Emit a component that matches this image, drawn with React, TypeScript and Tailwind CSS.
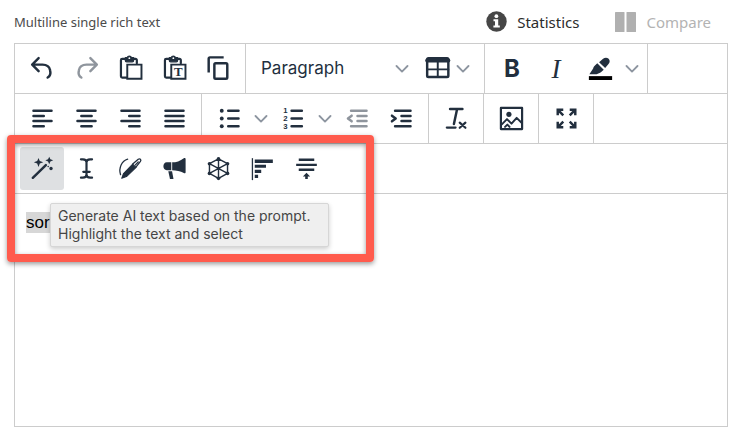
import React from 'react';
import { clsx } from 'clsx';

function Icon({ children }: { children: React.ReactNode }) {
  return (
    <svg
      width="31"
      height="31"
      viewBox="0 0 24 24"
      fill="none"
      stroke="currentColor"
      strokeWidth="1.9"
      strokeLinecap="round"
      strokeLinejoin="round"
      aria-hidden="true"
      className="shrink-0"
    >
      {children}
    </svg>
  );
}

function Chevron() {
  return (
    <svg width="14" height="8" viewBox="0 0 14 8" fill="none" stroke="#8d95a0" strokeWidth="1.8" strokeLinecap="round" strokeLinejoin="round" aria-hidden="true">
      <path d="M1.5 1 7 6.6 12.5 1" />
    </svg>
  );
}

type ToolButtonProps = {
  label: string;
  active?: boolean;
  disabled?: boolean;
  children: React.ReactNode;
};

function ToolButton({ label, active, disabled, children }: ToolButtonProps) {
  return (
    <button
      type="button"
      aria-label={label}
      disabled={disabled}
      className={clsx(
        'flex h-[43px] w-11 shrink-0 items-center justify-center rounded-[3px]',
        active && 'bg-[#dee0e2]',
        disabled ? 'text-[#8f959d]' : 'text-[#222f3e]'
      )}
    >
      {children}
    </button>
  );
}

function MenuArrow({ label }: { label: string }) {
  return (
    <button type="button" aria-label={label} className="flex h-[43px] w-5 shrink-0 items-center justify-center">
      <Chevron />
    </button>
  );
}

function Group({ children }: { children: React.ReactNode }) {
  return <div className="flex items-center border-r border-[#cccccc] px-[5px]">{children}</div>;
}

function Row({ children }: { children: React.ReactNode }) {
  return <div className="flex h-[50px] border-b border-[#cccccc]">{children}</div>;
}

const Clipboard = () => (
  <>
    <path d="M7.5 4.6H5.6a1 1 0 0 0-1 1V18a1 1 0 0 0 1 1H9M14.8 4.6h1.1a1 1 0 0 1 1 1V8" strokeWidth="1.7" />
    <path d="M8 3.6h1.4a1.8 1.8 0 0 1 3.4 0h1.6v2.2a1 1 0 0 1-1 1H9a1 1 0 0 1-1-1z" fill="currentColor" strokeWidth="1" />
    <circle cx="11.1" cy="4" r=".7" fill="#fff" stroke="none" />
    <path d="M9.5 9h11v11h-11z" strokeWidth="1.5" strokeLinejoin="miter" />
  </>
);

export default function App() {
  return (
    <main className="bg-white pr-[22px] pl-3.5 [font-family:Inter,Roboto,sans-serif]">
      <header className="flex h-[43px] items-center justify-between">
        <label id="editor-label" className="font-['Noto_Sans',sans-serif] text-[13px] leading-5 text-[#4b4b4b]">
          Multiline single rich text
        </label>
        <div className="flex items-center gap-9 pr-[17px] font-['Noto_Sans',sans-serif] text-[15px] leading-6">
          <button type="button" className="flex items-center gap-2.5 text-[#2c2c2c]">
            <svg width="21" height="21" viewBox="0 0 21 21" aria-hidden="true">
              <circle cx="10.5" cy="10.5" r="10.2" fill="#464646" />
              <circle cx="10.4" cy="5.2" r="1.9" fill="#fff" />
              <path d="M7.5 8.3h4.7v6.2h1.6v2H7.4v-2H9v-4.2H7.5z" fill="#fff" />
            </svg>
            Statistics
          </button>
          <button type="button" disabled className="flex items-center gap-2.5 text-[#b3b3b3]">
            <svg width="21" height="20" viewBox="0 0 21 20" fill="#b0b0b0" aria-hidden="true">
              <rect width="9.5" height="20" rx=".6" />
              <rect x="11.5" width="9.5" height="20" rx=".6" />
            </svg>
            Compare
          </button>
        </div>
      </header>

      <section className="relative border border-[#cccccc]">
        <div role="toolbar" aria-label="Formatting">
          <Row>
            <Group>
              <ToolButton label="Undo">
                <Icon><path d="M9 4 4 9l5 5M4.4 9H12c3.4 0 5.4 1.7 5.9 4.3.5 2.3-.3 4.8-1.9 5.7" /></Icon>
              </ToolButton>
              <ToolButton label="Redo" disabled>
                <Icon><path d="m15 4 5 5-5 5M19.6 9H12c-3.4 0-5.4 1.7-5.9 4.3-.5 2.3.3 4.8 1.9 5.7" /></Icon>
              </ToolButton>
              <ToolButton label="Paste">
                <Icon><Clipboard /></Icon>
              </ToolButton>
              <ToolButton label="Paste as text">
                <Icon>
                  <Clipboard />
                  <text x="15" y="18" textAnchor="middle" fontSize="10" fontWeight="700" fill="currentColor" stroke="none" className="font-['Liberation_Serif',serif]">T</text>
                </Icon>
              </ToolButton>
              <ToolButton label="Copy">
                <Icon>
                  <rect x="8.8" y="8" width="10" height="12" rx="1" />
                  <path d="M4.4 15V4.4a1 1 0 0 1 1-1H16" strokeLinecap="butt" />
                </Icon>
              </ToolButton>
            </Group>
            <Group>
              <div className="relative flex h-[43px] w-[168px] items-center">
                <select aria-label="Block format" className="h-full w-full appearance-none bg-transparent pl-2.5 text-[17px] text-[#222f3e]">
                  <option>Paragraph</option>
                </select>
                <span className="pointer-events-none absolute right-2.5">
                  <Chevron />
                </span>
              </div>
              <button type="button" aria-label="Table" className="flex h-[43px] w-[60px] items-center gap-[3px] pl-[3px] text-[#222f3e]">
                <Icon>
                  <rect x="4" y="4" width="16.4" height="14.6" rx="1" />
                  <path d="M4 5.8h16.4" strokeWidth="3" />
                  <path d="M12.2 7v11.6M4 12.700h16.400" strokeWidth="1.5" />
                </Icon>
                <Chevron />
              </button>
            </Group>
            <Group>
              <ToolButton label="Bold"><b className="text-[24px] leading-8">B</b></ToolButton>
              <ToolButton label="Italic"><i className="font-['Liberation_Serif',serif] text-[27px] leading-8">I</i></ToolButton>
              <ToolButton label="Highlight color">
                <Icon>
                  <path d="M3 19.4h18" stroke="#000" strokeWidth="3" strokeLinecap="butt" />
                  <g fill="currentColor" stroke="none">
                    <path d="M3.400 16.400 6.300 12c.2-.9.5-1.500 1-2l2.200-2 5 4.900-2.200 2c-.7.6-1.300.8-2 .9l-1.300.6z" />
                    <path d="m10.900 7.200 3.100-2.700c1.300-1.100 3.200-1.100 4.300 0s1.100 2.900-.1 4.100l-2.600 3z" />
                  </g>
                </Icon>
              </ToolButton>
              <MenuArrow label="Highlight color menu" />
            </Group>
          </Row>

          <Row>
            <Group>
              <ToolButton label="Align left">
                <Icon><path d="M5 6h14M5 10h8M5 14h14M5 18h8" /></Icon>
              </ToolButton>
              <ToolButton label="Align center">
                <Icon><path d="M5 6h14M8 10h8M5 14h14M8 18h8" /></Icon>
              </ToolButton>
              <ToolButton label="Align right">
                <Icon><path d="M5 6h14M11 10h8M5 14h14M11 18h8" /></Icon>
              </ToolButton>
              <ToolButton label="Justify">
                <Icon><path d="M5 6h14M5 10h14M5 14h14M5 18h14" /></Icon>
              </ToolButton>
            </Group>
            <Group>
              <ToolButton label="Bullet list">
                <Icon>
                  <path d="M11 6h8M11 12h8M11 18h8" />
                  <g fill="currentColor" stroke="none">
                    <circle cx="6" cy="6" r="1.5" />
                    <circle cx="6" cy="12" r="1.5" />
                    <circle cx="6" cy="18" r="1.5" />
                  </g>
                </Icon>
              </ToolButton>
              <MenuArrow label="Bullet list menu" />
              <ToolButton label="Numbered list">
                <Icon>
                  <path d="M10.5 6H18.500M10.500 12H18.500M10.500 18H18.500" />
                  <g fill="currentColor" stroke="none" fontSize="6" fontWeight="700" className="font-['Liberation_Sans',sans-serif]">
                    <text x="4" y="8">1</text>
                    <text x="4" y="14">2</text>
                    <text x="4" y="20">3</text>
                  </g>
                </Icon>
              </ToolButton>
              <MenuArrow label="Numbered list menu" />
              <ToolButton label="Decrease indent" disabled>
                <Icon>
                  <path d="M7 6h12M12 10h7M12 14h7M7 18h12" />
                  <path d="M7.5 9.8 4.6 12l2.900 2.200" />
                </Icon>
              </ToolButton>
              <ToolButton label="Increase indent">
                <Icon>
                  <path d="M7 6h12M12 10h7M12 14h7M7 18h12" />
                  <path d="M4.6 9.8 7.5 12l-2.900 2.200" />
                </Icon>
              </ToolButton>
            </Group>
            <Group>
              <ToolButton label="Clear formatting">
                <Icon>
                  <path d="M7 4.600h9.600M12.400 5 10 16.300" />
                  <path d="M4.500 19h6.800M14.500 15.200l4.400 4M18.900 15.200l-4.400 4" strokeWidth="1.7" />
                </Icon>
              </ToolButton>
            </Group>
            <Group>
              <ToolButton label="Insert image">
                <Icon>
                  <rect x="3.8" y="3.8" width="16.4" height="16.4" strokeWidth="1.7" />
                  <path d="m4.500 16.500 4-4 3.500 3.500 4-4.500 4 4M7 18.500l1.800-1.800 1.700 1.800" strokeWidth="1.5" />
                  <circle cx="10" cy="8.8" r="2" fill="currentColor" stroke="none" />
                </Icon>
              </ToolButton>
            </Group>
            <Group>
              <ToolButton label="Fullscreen">
                <Icon>
                  <path
                    d="M5.2 9.500V5.200h4.300M5.700 5.700l3.800 3.800M14.500 5.200h4.300v4.300M18.300 5.700l-3.800 3.800M5.200 14.500v4.300h4.300M5.700 18.300l3.800-3.800M14.500 18.800h4.300v-4.300M18.300 18.300l-3.800-3.800"
                    strokeLinecap="butt"
                    strokeLinejoin="miter"
                  />
                </Icon>
              </ToolButton>
            </Group>
          </Row>

          <Row>
            <div className="flex items-center px-[5px]">
              <ToolButton label="Generate text" active>
                <Icon>
                  <path d="M4.500 19.200 14.600 9.400" />
                  <g fill="currentColor" stroke="none">
                    <path d="m8.900 3.800 1 2.300 2.700 1-2.700 1-1 2.700-1-2.700-2.600-1 2.600-1z" />
                    <path d="m17.200 2.900.9 2 2.200.8-2.200.8-.9 2.200-.9-2.200-2.100-.8 2.100-.8z" />
                    <circle cx="18.600" cy="12" r="1.300" />
                    <circle cx="16.400" cy="10.500" r=".6" />
                  </g>
                </Icon>
              </ToolButton>
              <ToolButton label="Rephrase">
                <Icon>
                  <path d="M7.700 4.900h1.500c1.700 0 2.800.9 2.800 2.300v9.500c0 1.400-1.100 2.400-2.800 2.400H7.700M16.300 4.900h-1.500c-1.700 0-2.800.9-2.800 2.300M16.300 19.100h-1.500c-1.700 0-2.800-1-2.800-2.400M9.500 14.600h5" strokeWidth="1.7" />
                </Icon>
              </ToolButton>
              <ToolButton label="Improve writing">
                <Icon>
                  <path d="M9.800 4.800C5.300 6.100 2.600 11.300 4.300 16.800" strokeWidth="1" />
                  <path d="m5.200 19.600 1.400-3.700 7.100-7.200 2.600 2.500-7.400 7z" fill="currentColor" strokeWidth=".8" />
                  <path d="m13.700 8.600 4.300-3.800c1.300-.8 2.600.5 1.700 1.700L16.200 11" strokeWidth="1" />
                  <path d="m15.600 9.400 2.400-2.400" strokeWidth="1" />
                </Icon>
              </ToolButton>
              <ToolButton label="Change tone">
                <Icon>
                  <g fill="currentColor" stroke="none">
                    <path d="M6 7.200h3.500v6.100H6c-1.600 0-2.600-1.300-2.600-3s1-3.100 2.600-3.100z" />
                    <path d="M10.200 7.200c3 0 6.300-1 9-3.200.7-.4 1.400-.2 1.400.7v10.200c0 .9-.7 1.100-1.400.6-2.700-1.600-5.800-2.200-9-2.200z" />
                    <path d="M7.200 14.200h2.900l1.100 5.900H8.500z" />
                  </g>
                </Icon>
              </ToolButton>
              <ToolButton label="Related topics">
                <Icon>
                  <path d="m12 4.600 7 3.700v7.500l-7 3.800-7-3.800V8.300zM12 4.600v15M5 8.300l14 7.500M19 8.300 5 15.800" strokeWidth="1.1" />
                  <g fill="currentColor" stroke="none">
                    <circle cx="12" cy="4.500" r="1.400" />
                    <circle cx="19" cy="8.300" r="1.400" />
                    <circle cx="19" cy="15.800" r="1.400" />
                    <circle cx="12" cy="19.600" r="1.400" />
                    <circle cx="5" cy="15.800" r="1.400" />
                    <circle cx="5" cy="8.300" r="1.400" />
                    <circle cx="12" cy="12" r="1.400" />
                  </g>
                </Icon>
              </ToolButton>
              <ToolButton label="Summarize">
                <Icon>
                  <path d="M4.200 4v17" strokeWidth="1" strokeLinecap="butt" />
                  <path d="M6 5h14v2.800H6zM6 9h8.700v2.500H6zM6 13h5v2.400H6zM6 16.900h2.600v2.500H6z" fill="currentColor" stroke="none" />
                </Icon>
              </ToolButton>
              <ToolButton label="Shorten">
                <Icon>
                  <path d="M6 5.300h12M4 9.200h16M6 13h12" strokeLinecap="butt" />
                  <path d="m12 15.200 2.800 2.900h-1.800v2.100h-2v-2.100H9.200z" fill="currentColor" stroke="none" />
                </Icon>
              </ToolButton>
            </div>
          </Row>
        </div>

        <div
          role="textbox"
          aria-multiline="true"
          aria-labelledby="editor-label"
          contentEditable
          suppressContentEditableWarning
          className="min-h-[232px] px-[11px] py-[18px] font-['Liberation_Sans',sans-serif] text-[17px] leading-[22px] text-black outline-none"
        >
          <mark className="bg-[#d7d7d7] py-px text-black">sor</mark>
        </div>

        <div className="pointer-events-none absolute top-[91px] -left-2 h-[127px] w-[367px] rounded-[4px] border-8 border-[#ff5b4d] shadow-[0_2px_5px_rgba(0,0,0,0.4),inset_0_2px_5px_rgba(0,0,0,0.4)]" />

        <div
          role="tooltip"
          className="absolute top-[159px] left-[35px] w-[279px] rounded-[2px] border border-[#d6d6d6] bg-[#efefef] px-[7px] py-[3px] text-[14px] leading-[18px] text-[#454545] shadow-[0_2px_5px_rgba(0,0,0,0.2)]"
        >
          Generate AI text based on the prompt.
          <br />
          Highlight the text and select
        </div>
      </section>
    </main>
  );
}
